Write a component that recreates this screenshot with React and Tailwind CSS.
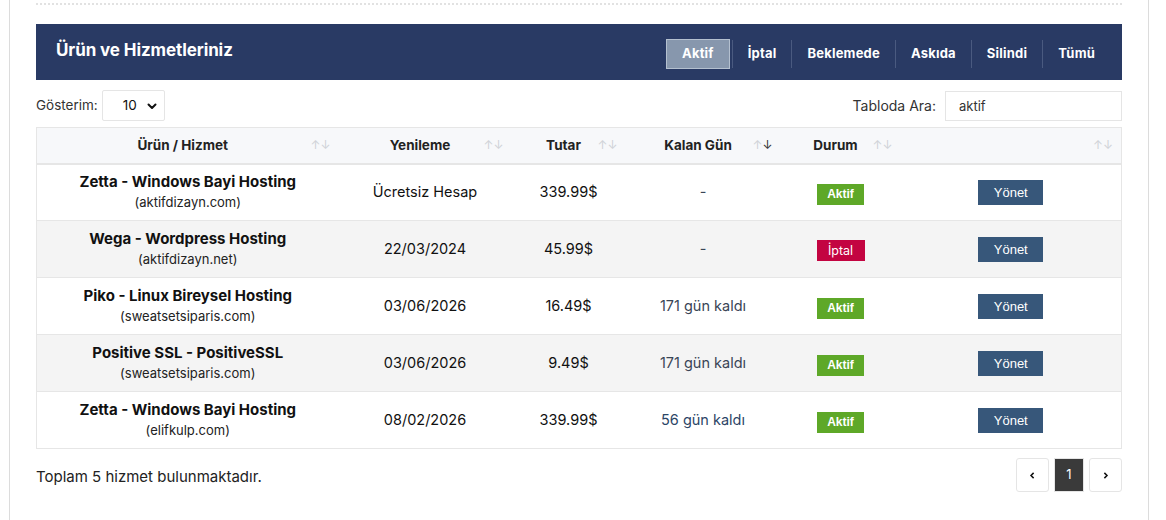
import React, { useState } from 'react';

const rows = [
  { urun: 'Zetta - Windows Bayi Hosting', domain: '(aktifdizayn.com)', yenileme: 'Ücretsiz Hesap', tutar: '339.99$', kalan: '-', durum: 'Aktif' },
  { urun: 'Wega - Wordpress Hosting', domain: '(aktifdizayn.net)', yenileme: '22/03/2024', tutar: '45.99$', kalan: '-', durum: 'İptal' },
  { urun: 'Piko - Linux Bireysel Hosting', domain: '(sweatsetsiparis.com)', yenileme: '03/06/2026', tutar: '16.49$', kalan: '171 gün kaldı', durum: 'Aktif' },
  { urun: 'Positive SSL - PositiveSSL', domain: '(sweatsetsiparis.com)', yenileme: '03/06/2026', tutar: '9.49$', kalan: '171 gün kaldı', durum: 'Aktif' },
  { urun: 'Zetta - Windows Bayi Hosting', domain: '(elifkulp.com)', yenileme: '08/02/2026', tutar: '339.99$', kalan: '56 gün kaldı', durum: 'Aktif', blue: true },
];

const tabs = ['Aktif', 'İptal', 'Beklemede', 'Askıda', 'Silindi', 'Tümü'];

const SortIcon = ({ desc }) => (
  <span className="absolute right-[8px] top-1/2 -translate-y-1/2 flex text-[12px] leading-none font-normal">
    <span className="text-[#d0d3d8]">↑</span>
    <span className={desc ? 'text-[#333]' : 'text-[#d0d3d8]'}>↓</span>
  </span>
);

const columns = [
  { label: 'Ürün / Hizmet', w: 'w-[302px]' },
  { label: 'Yenileme', w: 'w-[173px]' },
  { label: 'Tutar', w: 'w-[114px]' },
  { label: 'Kalan Gün', w: 'w-[155px]', desc: true },
  { label: 'Durum', w: 'w-[120px]' },
  { label: '', w: 'w-[221px]' },
];

export default function App() {
  const [tab, setTab] = useState('Aktif');
  const [search, setSearch] = useState('aktif');

  return (
    <div className="min-h-[520px] bg-white font-['Inter','Noto_Sans',sans-serif] text-[#222]">
      <div className="mx-[9px] w-[1140px] min-h-[520px] border-x border-[#dcdcdc] px-[26px]">
        <div className="h-[24px] pt-[3px]">
          <div className="border-t-2 border-dotted border-[#e2e2e2]" />
        </div>

        <div className="h-[56px] bg-[#293a64] flex items-center justify-between pl-[20px] pr-[12px]">
          <h2 className="text-white font-bold text-[17px] tracking-[-0.1px] -mt-[3px]">Ürün ve Hizmetleriniz</h2>
          <div className="flex items-center h-[30px] mt-[3px]">
            {tabs.map((t, i) => (
              <React.Fragment key={t}>
                {i > 0 && <div className="w-px h-[28px] bg-[#4a5a80]" />}
                <button
                  onClick={() => setTab(t)}
                  className={
                    'h-[30px] text-[13px] font-bold text-white tracking-[0.2px] ' +
                    (t === tab ? 'bg-[#8797ad] border border-[#b4c0cf] px-[15px] mr-[2px]' : 'px-[15px]')
                  }
                >
                  {t}
                </button>
              </React.Fragment>
            ))}
          </div>
        </div>

        <div className="flex items-center justify-between mt-[10px] h-[31px] text-[13.5px] text-[#333]">
          <div className="flex items-center gap-[4px]">
            <span>Gösterim:</span>
            <div className="w-[63px] h-[31px] border border-[#e5e5e5] rounded-[2px] flex items-center justify-between pl-[20px] pr-[6px] text-[#111]">
              <span>10</span>
              <svg width="12" height="12" viewBox="0 0 24 24" fill="none" stroke="#111" strokeWidth="4" strokeLinecap="round" strokeLinejoin="round"><path d="M5 9l7 7 7-7" /></svg>
            </div>
          </div>
          <div className="flex items-center gap-[9px]">
            <span className="text-[14px]">Tabloda Ara:</span>
            <input
              value={search}
              onChange={(e) => setSearch(e.target.value)}
              className="w-[177px] h-[30px] border border-[#e5e5e5] px-[13px] text-[13px] text-[#333] outline-none"
            />
          </div>
        </div>

        <table className="mt-[6px] w-[1085px] table-fixed border-collapse border border-[#e6e6e6]">
          <colgroup>
            {columns.map((c, i) => (
              <col key={i} className={c.w} />
            ))}
          </colgroup>
          <thead>
            <tr className="h-[36px] bg-[#f7f8fa] border-b-2 border-[#e6e6e6]">
              {columns.map((c, i) => (
                <th key={i} className="relative text-[13.5px] font-bold text-[#222] pr-[10px]">
                  {c.label}
                  <SortIcon desc={c.desc} />
                </th>
              ))}
            </tr>
          </thead>
          <tbody>
            {rows.map((r, i) => (
              <tr key={i} className={'h-[57px] border-b border-[#e6e6e6] ' + (i % 2 === 1 ? 'bg-[#f4f4f4]' : 'bg-white')}>
                <td className="text-center leading-[20px]">
                  <div className="font-bold text-[15px] text-[#111]">{r.urun}</div>
                  <div className="text-[13px] text-[#222]">{r.domain}</div>
                </td>
                <td className="text-center text-[14.5px] text-[#111]">{r.yenileme}</td>
                <td className="text-center text-[14.5px] text-[#111]">{r.tutar}</td>
                <td className={'text-center text-[14.5px] ' + (r.blue ? 'text-[#2c4566]' : 'text-[#3a4556]')}>{r.kalan}</td>
                <td className="text-center">
                  {r.durum === 'Aktif' ? (
                    <span className="inline-block w-[47px] h-[21px] leading-[21px] bg-[#5ea828] text-white text-[12px] font-bold font-['Liberation_Sans',Arial,sans-serif]">
                      Aktif
                    </span>
                  ) : (
                    <span className="inline-block w-[48px] h-[21px] leading-[21px] bg-[#c30441] text-white text-[12.5px]">
                      İptal
                    </span>
                  )}
                </td>
                <td className="text-center">
                  <button className="w-[65px] h-[25px] bg-[#37577a] text-white text-[13px] font-['Liberation_Sans',Arial,sans-serif]">
                    Yönet
                  </button>
                </td>
              </tr>
            ))}
          </tbody>
        </table>

        <div className="flex items-center justify-between mt-[9px]">
          <span className="text-[15px] text-[#222] mt-[4px]">Toplam 5 hizmet bulunmaktadır.</span>
          <div className="flex items-center gap-[5px]">
            <button className="w-[33px] h-[34px] border border-[#e5e5e5] rounded-[3px] flex items-center justify-center">
              <svg width="9" height="9" viewBox="0 0 24 24" fill="none" stroke="#111" strokeWidth="4"><path d="M15 5l-7 7 7 7" /></svg>
            </button>
            <button className="w-[30px] h-[34px] bg-[#3a3a3a] border border-[#e5e5e5] text-white text-[13px]">1</button>
            <button className="w-[33px] h-[34px] border border-[#e5e5e5] rounded-[3px] flex items-center justify-center">
              <svg width="9" height="9" viewBox="0 0 24 24" fill="none" stroke="#111" strokeWidth="4"><path d="M9 5l7 7-7 7" /></svg>
            </button>
          </div>
        </div>
      </div>
    </div>
  );
}
